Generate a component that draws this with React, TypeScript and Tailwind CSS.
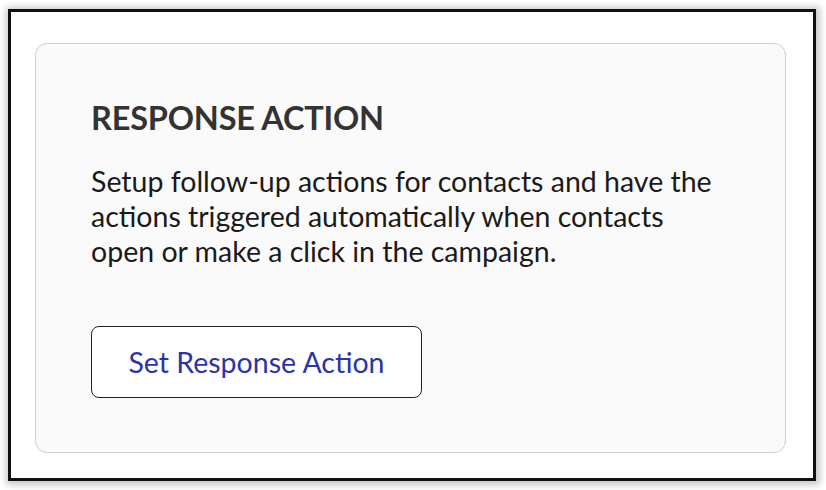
export default function App() {
  return (
    <div className="w-[826px] h-[490px] bg-white pt-[9px] pl-[8px] font-['Lato','Liberation_Sans',sans-serif]">
      {/* Outer frame */}
      <div className="w-[808px] h-[472px] border-[3px] border-[#111] bg-white shadow-[1px_1px_7px_3px_rgba(0,0,0,0.22)] pt-[31px] pl-[24px]">
        {/* Card */}
        <div className="w-[751px] h-[410px] rounded-[12px] border border-[#cfcfcf] bg-[#fafafa] pt-[54px] pl-[55px]">
          <h2 className="text-[32.5px] leading-[1.2] font-bold text-[#333] tracking-[-0.2px]">
            RESPONSE ACTION
          </h2>
          <p className="mt-[27px] max-w-[630px] text-[28.5px] leading-[35px] text-[#1a1a1a]">
            Setup follow-up actions for contacts and have the actions triggered automatically when contacts open or make a click in the campaign.
          </p>
          <button className="mt-[57px] w-[331px] h-[72px] rounded-[8px] border border-[#222] bg-white text-[28.5px] text-[#2a35a8]">
            Set Response Action
          </button>
        </div>
      </div>
    </div>
  )
}
